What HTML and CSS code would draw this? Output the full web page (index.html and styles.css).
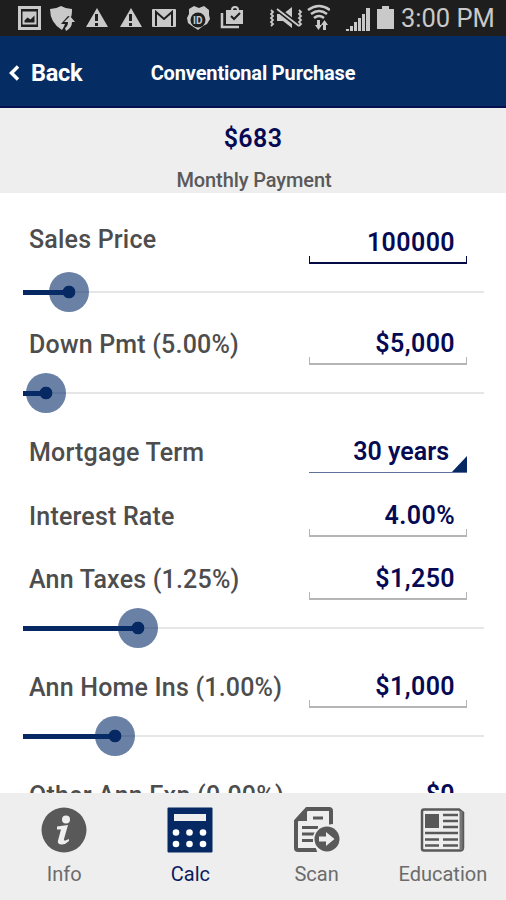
FILE: index.html
```html
<!DOCTYPE html>
<html lang="en">
<head>
    <meta charset="UTF-8">
    <meta name="viewport" content="width=device-width, initial-scale=1.0">
    <title>Conventional Purchase</title>
    <link rel="stylesheet" href="styles.css">
</head>
<body>
    <div class="app">
        <!-- Status bar -->
        <div class="status-bar">
            <svg class="status-icons" width="330" height="36" viewBox="0 0 330 36" fill="#c9c9c9">
                <!-- picture -->
                <path fill-rule="evenodd" d="M18 6h23v24H18zM21 9v18h17V9z"/>
                <path fill-rule="evenodd" d="M22.500 11.500h14v13h-14zM24.500 20.500v2h10v-7l-4 4-3-2z"/>
                <!-- shield -->
                <path d="M50 9q6 0 11-3 5 3 11 3 0 6-1 8l-3-1-7 8h4q-1 3-3 6-12-7-12-21z"/>
                <path d="M70 16l5 6h-3q0 6-6 9l-1-3q3-2 3-6h-4z"/>
                <!-- warnings -->
                <path fill-rule="evenodd" d="M97 8l11 19H86zM95 14v7h3v-7zM95 23v3h3v-3z"/>
                <path fill-rule="evenodd" d="M131 8l11 19h-22zM129 14v7h3v-7zM129 23v3h3v-3z"/>
                <!-- mail -->
                <rect x="152" y="9" width="24" height="18" rx="1"/>
                <path d="M156 26V12l8 7 8-7v14" fill="none" stroke="#1e1e1e" stroke-width="2"/>
                <!-- id badge -->
                <path d="M189 9l5-3 5 2 5-2 5 4v5l1 4-3 5-4 2-5 4-6-4-4-3-1-5 2-4z"/>
                <circle cx="198" cy="20" r="7.500" fill="#1e1e1e"/>
                <text class="id-text" x="193" y="24">ID</text>
                <!-- bag -->
                <path d="M222 13v14h17" fill="none" stroke="#c9c9c9" stroke-width="2.500"/>
                <path fill-rule="evenodd" d="M226 10h5q0-4 4-4t4 4h4v14h-17zM233 10h4q0-2-2-2t-2 2z"/>
                <path d="M231 16l3 3 6-6" fill="none" stroke="#1e1e1e" stroke-width="2"/>
                <!-- muted -->
                <path d="M277 14h6l9-7v21l-9-7h-6z"/>
                <path d="M276 8l24 19" stroke="#1e1e1e" stroke-width="5"/>
                <path d="M277 9l22 17M271 10l2 2-2 2 2 2-2 2 2 2-2 2 2 2-2 2M299 10l2 2-2 2 2 2-2 2 2 2-2 2 2 2-2 2" fill="none" stroke="#c9c9c9" stroke-width="1.800"/>
                <!-- wifi -->
                <path d="M308 10q11-8 22 0M311 14q8-6 16 0M314 18q5-4 10 0" fill="none" stroke="#c9c9c9" stroke-width="2.500"/>
                <path d="M317 20h3v5h2l-3.500 5-3.500-5h2zM323 30v-5h-2l3.500-5 3.500 5h-2v5z"/>
            </svg>
            <svg class="signal" width="50" height="36" viewBox="0 0 50 36" fill="#c9c9c9">
                <path d="M1 29h3v2H1zM5 26h3v5H5zM9 22h3v9H9zM13 18h3v13h-3zM17 14h3v17h-3zM21 8h4v23h-4zM32 9h5V6h7v3h5v20H32z"/>
            </svg>
            <span class="clock">3:00 PM</span>
        </div>

        <!-- Title bar -->
        <div class="header">
            <a class="back" href="#">
                <svg width="12" height="18" viewBox="0 0 12 18"><path d="M10 2.500L3.500 9l6.500 6.500" fill="none" stroke="#fff" stroke-width="3.500"/></svg>
                Back
            </a>
            <div class="title">Conventional Purchase</div>
        </div>

        <div class="summary">
            <div class="amount">$683</div>
            <div class="caption">Monthly Payment</div>
        </div>

        <!-- Loan inputs -->
        <div class="form">
            <div class="row first">
                <span class="label">Sales Price</span>
                <span class="field active">100000</span>
            </div>
            <div class="slider short"><div class="track"><div class="fill" style="width: 10%"><div class="thumb"></div></div></div></div>

            <div class="row">
                <span class="label">Down Pmt (5.00%)</span>
                <span class="field">$5,000</span>
            </div>
            <div class="slider"><div class="track"><div class="fill" style="width: 5%"><div class="thumb"></div></div></div></div>

            <div class="row">
                <span class="label">Mortgage Term</span>
                <span class="field select">30 years</span>
            </div>
            <div class="row spaced">
                <span class="label">Interest Rate</span>
                <span class="field">4.00%</span>
            </div>
            <div class="row spaced">
                <span class="label">Ann Taxes (1.25%)</span>
                <span class="field">$1,250</span>
            </div>
            <div class="slider"><div class="track"><div class="fill" style="width: 25%"><div class="thumb"></div></div></div></div>

            <div class="row">
                <span class="label">Ann Home Ins (1.00%)</span>
                <span class="field">$1,000</span>
            </div>
            <div class="slider"><div class="track"><div class="fill" style="width: 20%"><div class="thumb"></div></div></div></div>

            <div class="row">
                <span class="label">Other Ann Exp (0.00%)</span>
                <span class="field">$0</span>
            </div>
        </div>

        <!-- Bottom tabs -->
        <div class="tabs">
            <a class="tab" href="#">
                <svg width="46" height="46" viewBox="0 0 46 46">
                    <circle cx="23" cy="23" r="22.500" fill="#595959"/>
                    <circle cx="25" cy="12.500" r="4" fill="#eee"/>
                    <path d="M16 19.500l11-1.500-4 14q-.5 2 1.500 1.500l3.500-1.500v2q-4 4-8 3.500-4-.5-3-4l3-11h-4z" fill="#eee"/>
                </svg>
                <span>Info</span>
            </a>
            <a class="tab selected" href="#">
                <svg width="46" height="46" viewBox="0 0 46 46">
                    <rect x=".5" y=".5" width="45" height="45" rx="1" fill="#062863"/>
                    <path d="M7 7h32v7H7z" fill="#eee"/>
                    <g fill="#fff">
                        <circle cx="9" cy="25.500" r="3.300"/><circle cx="22.500" cy="25.500" r="3.300"/><circle cx="36" cy="25.500" r="3.300"/>
                        <circle cx="9" cy="37" r="3.300"/><circle cx="22.500" cy="37" r="3.300"/><circle cx="36" cy="37" r="3.300"/>
                    </g>
                </svg>
                <span>Calc</span>
            </a>
            <a class="tab" href="#">
                <svg width="46" height="46" viewBox="0 0 46 46">
                    <path d="M13 2h22q2 0 2 2v39H4q-2 0-2-2V14z" fill="#eee" stroke="#595959" stroke-width="4"/>
                    <path d="M0 14L13 0v14z" fill="#595959"/>
                    <path d="M19 11h10M8 20.500h16M8 27h13M8 33.500h11" stroke="#595959" stroke-width="3"/>
                    <path d="M39 17v30H24l-3-8V29l3-6 8-5z" fill="#eee"/>
                    <circle cx="33" cy="32" r="14" fill="#eee"/>
                    <circle cx="33" cy="32" r="12.500" fill="#595959"/>
                    <path d="M25 29.500h7V25l8.500 7-8.500 7v-4.500h-7z" fill="#eee"/>
                </svg>
                <span>Scan</span>
            </a>
            <a class="tab" href="#">
                <svg width="46" height="46" viewBox="0 0 46 46">
                    <path d="M4 2.500h35l4 3v35q0 3-3 3H4q-2 0-2-2v-37q0-2 2-2z" fill="#eee" stroke="#595959" stroke-width="2.500"/>
                    <path d="M41 4v39" stroke="#777" stroke-width="3"/>
                    <path d="M5 7h14v14H5z" fill="#595959"/>
                    <path d="M23 8h15M23 14h15M23 20h15M5 26h33M5 32.500h14M23 32.500h15M5 38.500h14M23 38.500h15" stroke="#595959" stroke-width="2.500"/>
                </svg>
                <span>Education</span>
            </a>
        </div>
    </div>
</body>
</html>
```

FILE: styles.css
```css
* {
    box-sizing: border-box;
}
body {
    margin: 0;
    font-family: Roboto, sans-serif;
    background: #fff;
}
a {
    text-decoration: none;
}
.app {
    display: flex;
    flex-direction: column;
    height: 900px;
    overflow: hidden;
}
.status-bar {
    display: flex;
    align-items: center;
    height: 36px;
    flex: none;
    background: #1e1e1e;
    color: #c9c9c9;
}
.signal {
    margin-left: 15px;
}
.clock {
    margin-left: 6px;
    font-size: 25.5px;
    white-space: nowrap;
}
.id-text {
    font-size: 10px;
    font-weight: bold;
}
.header {
    display: grid;
    grid-template-columns: 1fr auto 1fr;
    align-items: center;
    height: 72px;
    flex: none;
    padding-top: 4px;
    background: #062d63;
    border-bottom: 2px solid #04104f;
    color: #fff;
    font-weight: bold;
}
.back {
    display: flex;
    align-items: center;
    gap: 11px;
    padding-left: 8px;
    color: #fff;
    font-size: 23.5px;
    letter-spacing: -0.3px;
}
.title {
    font-size: 20px;
    letter-spacing: -0.15px;
}
.summary {
    height: 85px;
    flex: none;
    padding-top: 15px;
    background: #eee;
    text-align: center;
}
.amount {
    font-size: 25px;
    font-weight: 600;
    line-height: 32px;
    letter-spacing: 0.4px;
    color: #060a54;
}
.caption {
    margin-top: 10px;
    padding-left: 2px;
    font-size: 20px;
    font-weight: 500;
    line-height: 30px;
    letter-spacing: -0.1px;
    color: #595959;
}
.form {
    flex: 1;
    min-height: 0;
    overflow: hidden;
    padding: 25px 22px 0 23px;
}
.row {
    display: flex;
    justify-content: space-between;
    height: 46px;
    padding: 0 17px 0 6px;
    font-size: 25px;
    font-weight: 500;
    line-height: 51px;
    letter-spacing: 0.2px;
    white-space: nowrap;
}
.row.spaced {
    margin-top: 17.5px;
}
.label {
    color: #4d4d4d;
}
.first .label {
    line-height: 43px;
}
.field {
    position: relative;
    width: 158px;
    padding-right: 12px;
    color: #060a54;
    font-weight: 600;
    line-height: 50px;
    text-align: right;
    letter-spacing: 0.4px;
}
/* bracket shaped underline */
.field::after {
    content: "";
    position: absolute;
    left: 0;
    right: 0;
    bottom: 0;
    height: 6px;
    border: 1px solid #b5b5b5;
    border-top: none;
    border-bottom-width: 2px;
}
.field.active {
    line-height: 49px;
}
.field.active::after {
    border-color: #060a44;
}
.field.select {
    padding-right: 18px;
    letter-spacing: 0;
}
.field.select::after {
    height: 1px;
    border: none;
    background: #60719c;
}
.field.select::before {
    content: "";
    position: absolute;
    right: 0;
    bottom: 0;
    border-left: 16px solid transparent;
    border-bottom: 17px solid #062863;
}
.slider {
    height: 62px;
    padding-top: 28px;
}
.slider.short {
    height: 55px;
}
.track {
    height: 2px;
    margin-top: -1px;
    background: #e4e6e8;
}
.fill {
    position: relative;
    top: -1.5px;
    height: 5px;
    background: #062863;
}
.thumb {
    position: absolute;
    right: -20px;
    top: -17.5px;
    width: 40px;
    height: 40px;
    border-radius: 50%;
    background: radial-gradient(circle, #062863 6px, rgba(6, 45, 105, 0.6) 6.7px);
}
.tabs {
    display: grid;
    grid-template-columns: repeat(4, 1fr);
    height: 107px;
    flex: none;
    padding-left: 1px;
    background: #eee;
}
.tab {
    display: flex;
    flex-direction: column;
    align-items: center;
    padding-top: 14px;
    color: #6b6b6b;
    font-size: 20px;
}
.tab span {
    margin-top: 9px;
}
.tab.selected {
    color: #0b1b5e;
}
```
